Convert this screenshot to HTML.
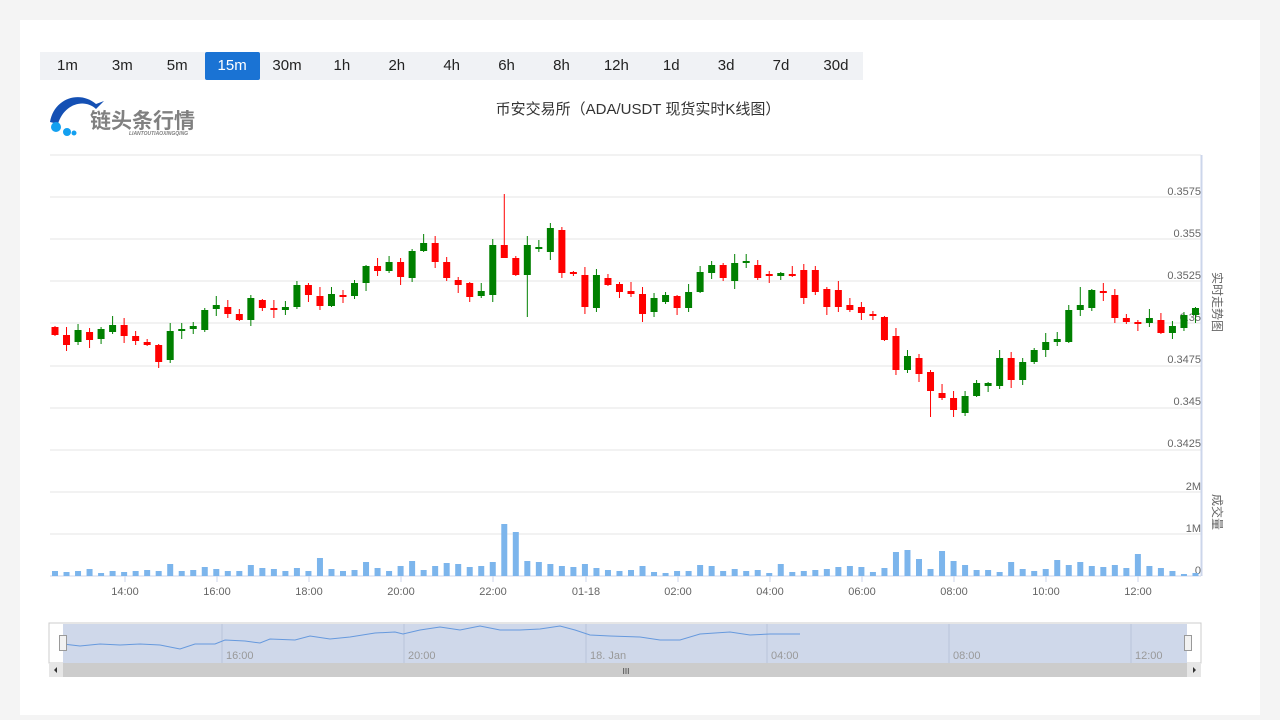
<!DOCTYPE html>
<html><head><meta charset="utf-8"><style>
body{margin:0;background:#f4f4f4;font-family:"Liberation Sans","Noto Sans CJK SC",sans-serif;}
#p{position:absolute;left:20px;top:20px;width:1240px;height:695px;background:#fff;}
.tabs{position:absolute;left:40px;top:52px;height:28px;display:flex;background:#f0f2f5;}
.tabs div{width:54.9px;text-align:center;line-height:28px;font-size:15px;color:#222;}
.tabs .a{background:#1a73d4;color:#fff;border-radius:2px;}
svg{position:absolute;left:0;top:0;}
</style></head><body>
<div id="p"></div>
<div class="tabs"><div>1m</div><div>3m</div><div>5m</div><div class="a">15m</div><div>30m</div><div>1h</div><div>2h</div><div>4h</div><div>6h</div><div>8h</div><div>12h</div><div>1d</div><div>3d</div><div>7d</div><div>30d</div></div>
<svg id="s" width="1280" height="720" font-family="Liberation Sans, Noto Sans CJK SC, sans-serif">
<path d="M50 122 C54 98 80 90 96 104 L104 101 L96 109 C84 98 64 104 58 124 Z" fill="#1450b4"/>
<circle cx="56" cy="127" r="5" fill="#13a0f0"/><circle cx="67" cy="132" r="4" fill="#13a0f0"/><circle cx="74" cy="133" r="2.5" fill="#13a0f0"/>
<text x="90" y="128" font-size="21" font-weight="bold" fill="#808080">链头条行情</text>
<text x="129" y="135" font-size="5" font-weight="bold" fill="#808080" font-style="italic">LIANTOUTIAOXINGQING</text>
<text x="638" y="114" font-size="15" fill="#333" text-anchor="middle">币安交易所（ADA/USDT 现货实时K线图）</text>
<g id="g"></g>
</svg>
<script>
var g=document.getElementById('g'),h='';
function L(a){h+=a;}
[155,197,239,281,323,366,408,450,492,534].forEach(function(y){L('<line x1="50" x2="1201" y1="'+y+'" y2="'+y+'" stroke="#e6e6e6"/>')});
L('<line x1="50" x2="1201" y1="576" y2="576" stroke="#ccd6eb"/><line x1="1201.5" x2="1201.5" y1="155" y2="576" stroke="#ccd6eb" stroke-width="2"/>');
[['0.3575',191],['0.355',233],['0.3525',275],['0.35',317],['0.3475',359],['0.345',401],['0.3425',443],['2M',486],['1M',528],['0',570]].forEach(function(t){L('<text x="1201" y="'+(t[1]+4)+'" font-size="11" fill="#666" text-anchor="end">'+t[0]+'</text>')});
L('<text font-size="12" fill="#666" transform="translate(1213,272) rotate(90)">实时走势图</text><text font-size="12" fill="#666" transform="translate(1213,494) rotate(90)">成交量</text>');
[['14:00',125],['16:00',217],['18:00',309],['20:00',401],['22:00',493],['01-18',586],['02:00',678],['04:00',770],['06:00',862],['08:00',954],['10:00',1046],['12:00',1138]].forEach(function(t){L('<line x1="'+t[1]+'" x2="'+t[1]+'" y1="576" y2="582" stroke="#ccd6eb"/><text x="'+t[1]+'" y="595" font-size="11" fill="#666" text-anchor="middle">'+t[0]+'</text>')});
var c=[[327,335,0],[335,345,0],[330,342,1],[332,340,0],[329,339,1],[325,332,1],[325,336,0],[336,341,0],[342,345,0],[345,362,0],[331,360,1],[329,331,1],[326,329,1],[310,330,1],[305,309,1],[307,314,0],[314,320,0],[298,320,1],[300,308,0],[308,310,0],[307,310,1],[285,307,1],[285,295,0],[296,306,0],[294,306,1],[295,297,0],[283,296,1],[266,283,1],[266,271,0],[262,271,1],[262,277,0],[251,278,1],[243,251,1],[243,262,0],[262,278,0],[280,285,0],[283,297,0],[291,296,1],[245,295,1],[245,258,0],[258,275,0],[245,275,1],[247,249,1],[228,252,1],[230,273,0],[272,274,0],[275,307,0],[275,308,1],[278,285,0],[284,292,0],[291,294,0],[294,314,0],[298,312,1],[295,302,1],[296,308,0],[292,308,1],[272,292,1],[265,273,1],[265,278,0],[263,281,1],[261,263,1],[265,278,0],[274,276,0],[273,276,1],[274,276,0],[270,298,0],[270,292,0],[289,307,0],[290,307,0],[305,310,0],[307,313,0],[314,316,0],[317,340,0],[336,370,0],[356,370,1],[358,374,0],[372,391,0],[393,398,0],[398,410,0],[396,413,1],[383,396,1],[383,386,1],[358,386,1],[358,380,0],[362,380,1],[350,362,1],[342,350,1],[339,342,1],[310,342,1],[305,310,1],[290,308,1],[291,293,0],[295,318,0],[318,322,0],[322,324,0],[318,323,1],[320,333,0],[326,333,1],[315,328,1],[308,315,1]];
var vol=[5,4,5,7,3,5,4,5,6,5,12,5,6,9,7,5,5,11,8,7,5,8,5,18,7,5,6,14,8,5,10,15,6,10,13,12,9,10,14,52,44,15,14,12,10,9,12,8,6,5,6,10,4,3,5,5,11,10,5,7,5,6,3,12,4,5,6,7,9,10,9,4,8,24,26,17,7,25,15,11,6,6,4,14,7,5,7,16,11,14,10,9,11,8,22,10,8,5,2,3];
var sp=11.52,x0=55;
c.forEach(function(k,i){var x=x0+i*sp,col=k[2]?'#008000':'#ff0000';var t=k[0],b=k[1];var hi=t-((i*7)%9)-1,lo=b+((i*5)%8)+1;
if(i==39){hi=194;lo=246} if(i==41){lo=317} if(i==30){lo=285} if(i==73){lo=375} if(i==76){lo=417} if(i==79){lo=416} if(i==89){hi=287}
L('<line x1="'+x+'" x2="'+x+'" y1="'+hi+'" y2="'+lo+'" stroke="'+col+'"/><rect x="'+(x-3.5)+'" y="'+t+'" width="7" height="'+Math.max(1.5,b-t)+'" fill="'+col+'"/>');
var v=vol[i]||4;L('<rect x="'+(x-3)+'" y="'+(576-v)+'" width="6" height="'+v+'" fill="#7cb5ec"/>');});
L('<rect x="49" y="623" width="1152" height="40" fill="#fff" stroke="#ccc"/><rect x="63" y="624" width="1124" height="39" fill="#cfd8ea"/>');
[222,404,586,767,949,1131].forEach(function(x){L('<line x1="'+x+'" x2="'+x+'" y1="624" y2="663" stroke="#b8c4da"/>')});
[['16:00',226],['20:00',408],['18. Jan',590],['04:00',771],['08:00',953],['12:00',1135]].forEach(function(t){L('<text x="'+t[1]+'" y="659" font-size="11" fill="#999">'+t[0]+'</text>')});
L('<path d="M63 644 L80 646 L100 644 L120 645 L140 644 L160 645 L180 649 L195 644 L215 644 L225 640 L245 641 L260 643 L270 639 L295 640 L310 636 L330 639 L350 637 L375 633 L395 632 L403 634 L420 630 L440 627 L460 630 L480 626 L500 630 L520 630 L540 629 L560 626 L575 630 L590 635 L610 636 L640 637 L660 640 L680 640 L700 634 L730 632 L750 635 L770 634 L800 634" fill="none" stroke="#6699dd"/>');
L('<rect x="59.5" y="635.5" width="7" height="15" fill="#f2f2f2" stroke="#999"/><rect x="1184.5" y="635.5" width="7" height="15" fill="#f2f2f2" stroke="#999"/>');
L('<rect x="49" y="663" width="1152" height="14" fill="#ccc"/><rect x="49" y="663" width="14" height="14" fill="#e6e6e6"/><rect x="1187" y="663" width="14" height="14" fill="#e6e6e6"/><path d="M54 670 L57 667 L57 673Z M1196 670 L1193 667 L1193 673Z" fill="#333"/><text x="626" y="674" font-size="8" fill="#333" text-anchor="middle">III</text>');
g.innerHTML=h;
</script>
</body></html>
